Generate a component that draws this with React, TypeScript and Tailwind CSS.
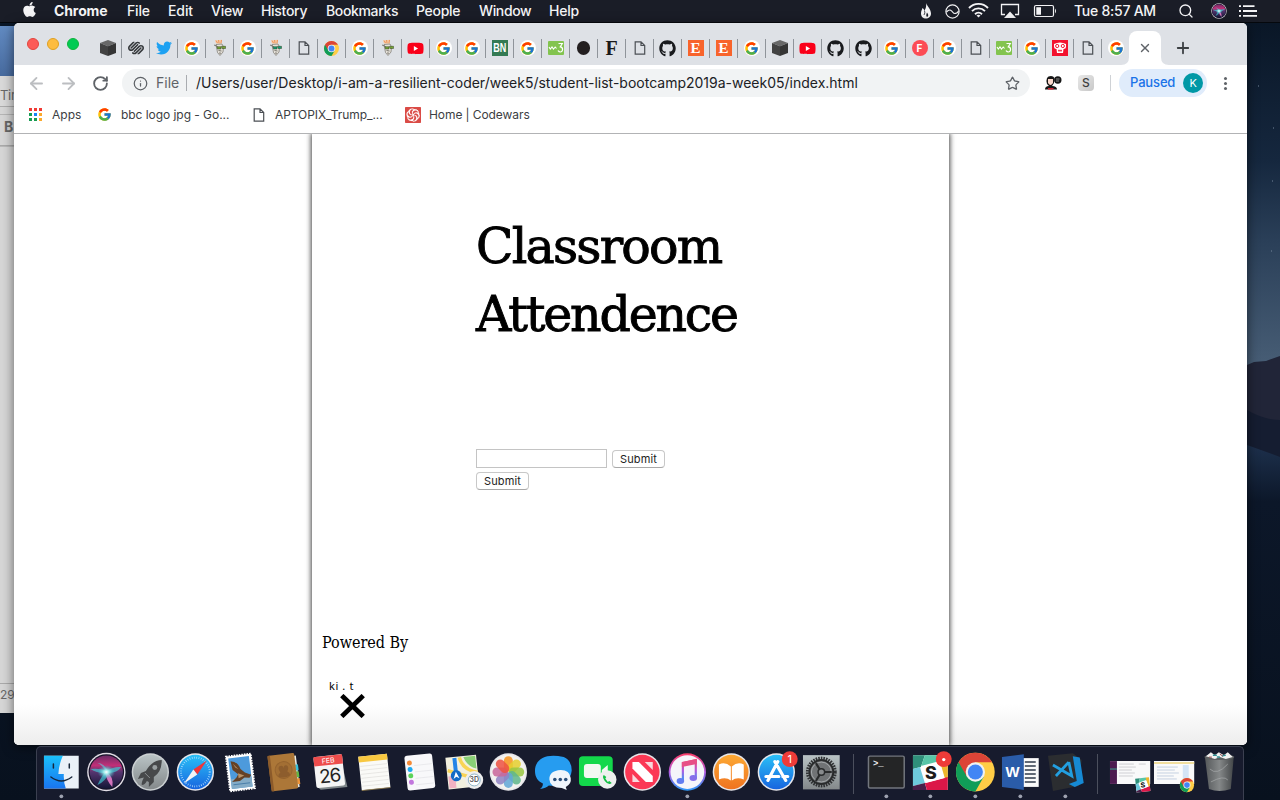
import React from "react";
import { FaApple, FaTwitter, FaGithub, FaYoutube } from "react-icons/fa";
import { FcGoogle } from "react-icons/fc";
import { SiSquarespace, SiCodewars } from "react-icons/si";
import { ArrowLeft, ArrowRight, Info, Plus, RotateCw, Search, Star, X } from "lucide-react";

type Kids = { children: React.ReactNode };

/* ---------- favicons ---------- */

const Google = () => (
  <span className="flex size-4 items-center justify-center rounded-full bg-white">
    <FcGoogle size={15} />
  </span>
);

const Cube = () => (
  <svg width="18" height="18" viewBox="0 0 18 18">
    <path d="M9 1 17 4 9 7.200 1 4Z" fill="#686868" />
    <path d="M1 4 9 7.200V17L1 14Z" fill="#424242" />
    <path d="M17 4 9 7.200V17L17 14Z" fill="#353535" />
  </svg>
);

const Page = () => (
  <svg width="12" height="14" viewBox="0 0 12 14" fill="none" stroke="#4b4f54" strokeWidth="1.200">
    <path d="M1.200.8H7L10.700 4.500V13.200H1.200Z M7 .8V4.500H10.700" />
  </svg>
);

const Goat = ({ green = false }: { green?: boolean }) => (
  <svg width="14" height="18" viewBox="0 0 14 18">
    <path d="M2 1.500 9 .8 8.500 5 3 4.500Z" fill="#f8c9a2" />
    <path d="M3 1.500 4.500 4M5.500 1 6 4M8.500 1 8 4" stroke="#eb965f" fill="none" />
    <path d="M3 5.500 9 5 10.500 8 10 13 7 16.500 4.500 13.500Z" fill="#e6e2da" stroke="#77736b" strokeWidth=".7" />
    <path d="M1 6 4.500 7.500M5.500 11.500 8.500 12M6 14 8 14.200" stroke="#5e5a53" strokeWidth=".8" fill="none" />
    <path d="M4 7.700H8L8 10H4.500ZM8.500 7.300H12.500V9.500H9Z" fill={green ? "#149b72" : "#76a534"} stroke="#334023" strokeWidth=".5" />
  </svg>
);

const ChromeShape = () => (
  <g>
    <circle cx="10" cy="10" r="10" fill="#ffcd46" />
    <path d="M10 10 1.340 5A10 10 0 0 0 10 20L14.330 12.500Z" fill="#109d58" />
    <path d="M1.340 5A10 10 0 0 1 18.660 5H10L5.670 12.500Z" fill="#db4437" />
    <circle cx="10" cy="10" r="5" fill="#f1f1f1" />
    <circle cx="10" cy="10" r="3.900" fill="#4285f4" />
  </g>
);

const Youtube = () => (
  <span className="relative flex items-center justify-center">
    <i className="absolute size-[7px] bg-white" />
    <FaYoutube size={17} color="#fa0019" className="relative" />
  </span>
);

const W3 = () => (
  <svg width="16" height="14" viewBox="0 0 16 14">
    <rect width="16" height="14" rx="1" fill="#83c44f" />
    <path d="M1 6 2.300 8 4 6 5.500 8 7.200 6 8.500 7.500" stroke="#fff" strokeWidth="1.100" fill="none" />
    <path d="M10.500 2.500H14.300L12.300 5.800C15.600 6.200 15 11 12.300 11 11 11 10.500 10.200 10 9.500" stroke="#fff" strokeWidth="1.200" fill="none" />
  </svg>
);

const Etsy = () => (
  <span className="flex size-4 items-center justify-center bg-[#f8642c] font-['Liberation_Serif',serif] text-[15px] leading-none font-bold text-white">E</span>
);

const Robot = () => (
  <svg width="16" height="16" viewBox="0 0 16 16">
    <rect width="16" height="16" fill="#f3122f" />
    <path d="M2 4Q8 1 14 4V7Q14 9 11.500 9L11 13H5L4.500 9Q2 9 2 7Z" fill="#fff" />
    <circle cx="5.200" cy="6" r="1.600" fill="none" stroke="#f3122f" />
    <circle cx="10.800" cy="6" r="1.600" fill="none" stroke="#f3122f" />
    <path d="M6 10.500H10M7 12V9.500M9 12V9.500" stroke="#f3122f" strokeWidth=".7" />
  </svg>
);

type Fav = "cube" | "sq" | "tw" | "g" | "goat" | "goat2" | "page" | "chrome" | "yt" | "bn" | "w3" | "dot" | "F" | "gh" | "etsy" | "fred" | "robot";

const favicon: Record<Fav, React.ReactNode> = {
  cube: <Cube />,
  sq: <SiSquarespace size={16} color="#35383b" />,
  tw: <FaTwitter size={16} color="#1da1f2" />,
  g: <Google />,
  goat: <Goat />,
  goat2: <Goat green />,
  page: <Page />,
  chrome: <svg width="15" height="15" viewBox="0 0 20 20"><ChromeShape /></svg>,
  yt: <Youtube />,
  bn: <span className="flex size-4 items-center justify-center bg-[#347a53] text-white"><span className="scale-x-75 font-['Liberation_Sans',sans-serif] text-[12px] leading-none font-bold">BN</span></span>,
  w3: <W3 />,
  dot: <span className="size-[13.500px] rounded-full bg-[#231f20]" />,
  F: <span className="font-['Liberation_Serif',serif] text-[20px] leading-none font-bold text-[#1a1a1a]">F</span>,
  gh: <FaGithub size={17} color="#191b1e" />,
  etsy: <Etsy />,
  fred: <span className="flex size-4 items-center justify-center rounded-full bg-[#fc4c55] font-['Inter',sans-serif] text-[10px] leading-none font-bold text-white">F</span>,
  robot: <Robot />,
};

const tabs: Fav[] = [
  "cube", "sq", "tw", "g", "goat", "g", "goat2", "page", "chrome", "g", "goat", "yt", "g", "g", "bn", "g", "w3", "dot", "F",
  "page", "gh", "etsy", "etsy", "g", "cube", "yt", "gh", "gh", "g", "fred", "g", "page", "w3", "g", "robot", "page", "g",
];

/* ---------- menu bar ---------- */

const MenuBar = () => (
  <div className="flex h-[23px] shrink-0 items-center border-b border-[#05080d] bg-[#1a1d27] pb-px pl-[21px] text-[14px] font-medium text-[#f4f4f6]">
    <div className="w-[33px]"><FaApple size={17} className="-mt-0.5" /></div>
    <div className="w-[73px] font-bold tracking-[-0.100px]">Chrome</div>
    <div className="w-[41px] tracking-[-0.150px]">File</div>
    <div className="w-[43px] tracking-[-0.100px]">Edit</div>
    <div className="w-[50px] tracking-[-0.200px]">View</div>
    <div className="w-[65px] tracking-[-0.300px]">History</div>
    <div className="w-[90px] tracking-[-0.350px]">Bookmarks</div>
    <div className="w-[63px] tracking-[-0.300px]">People</div>
    <div className="w-[70px] tracking-[-0.350px]">Window</div>
    <div className="w-[370px] tracking-[-0.200px]">Help</div>
    <div className="flex h-full w-[155px] items-center">
      <svg width="155" height="22" viewBox="919 0 155 22" fill="none" stroke="#f4f4f6">
        <path d="M926 3C927 6 931 9 931 13.500 931 17 928.500 18.500 926 18.500 923 18.500 921 16.500 921 13.500 921 11 922 10 922.500 8 924 9 924 10 924.500 10.500 926 8 926.500 6 926 3Z" fill="#f4f4f6" stroke="none" />
        <path d="M924.500 10.500Q925.500 13 924 15" stroke="#1a1d27" strokeWidth=".8" />
        <path d="M927 12.500Q929.500 15.500 927 17 925.500 15.500 927 12.500Z" fill="#1a1d27" stroke="none" />
        <circle cx="952.500" cy="11.500" r="6.600" strokeWidth="1.200" />
        <path d="M946.500 12C950 8 952 11 953 12.500S957 14 958.500 11" strokeWidth="1.200" />
        <path d="M969 8A13 13 0 0 1 988 8M972 11.200A9 9 0 0 1 985 11.200M975 14.200A5 5 0 0 1 982 14.200" strokeWidth="1.900" />
        <path d="M978.500 17.500 976.500 15.500Q978.500 14 980.500 15.500Z" fill="#f4f4f6" stroke="none" />
        <path d="M1005 14.500H1001.500V4.500H1018.500V14.500H1015" strokeWidth="1.300" />
        <path d="M1010 11.500 1016 18H1004Z" fill="#f4f4f6" stroke="none" />
        <rect x="1034.500" y="5.500" width="19" height="11" rx="1.500" strokeWidth="1.200" />
        <path d="M1036.300 7.300H1041V14.700H1036.300Z M1055 8.500Q1057 11 1055 13.500Z" fill="#f4f4f6" stroke="none" />
      </svg>
    </div>
    <div className="w-[104px] tracking-[-0.250px] whitespace-nowrap">Tue 8:57 AM</div>
    <Search size={16} strokeWidth={2} />
    <svg className="ml-[17px]" width="16" height="16" viewBox="-20 -20 40 40"><SiriShape /></svg>
    <svg className="ml-[12px]" width="18" height="12" viewBox="0 0 18 12">
      <path d="M0 1.200H2M0 6H2M0 10.800H2M4 1.200H15.500M4 6H18M4 10.800H18" stroke="#f4f4f6" strokeWidth="1.800" />
    </svg>
  </div>
);

const SiriShape = () => (
  <g>
    <defs>
      <linearGradient id="siri" x1="0" y1="0" x2="0" y2="1">
        <stop offset="0" stopColor="#6b2c66" /><stop offset=".3" stopColor="#c22f78" /><stop offset=".5" stopColor="#55356f" /><stop offset="1" stopColor="#131636" />
      </linearGradient>
      <radialGradient id="siriGlow"><stop offset="0" stopColor="#fff" /><stop offset=".3" stopColor="#a5f4f1" stopOpacity=".9" /><stop offset="1" stopColor="#2cb5c7" stopOpacity="0" /></radialGradient>
    </defs>
    <circle r="19.300" fill="#e3dfe7" /><circle r="17.900" fill="#171329" /><circle r="16.700" fill="url(#siri)" />
    <path d="M-16 -3Q-6 -4 0 -1 8 -6 15 -5 11 1 2 1 0 9 -9 13 -5 5 -2 1-10 1-16-3Z" fill="#3fd0d8" opacity=".65" />
    <path d="M0 0Q8 5 6 15 0 9 -1 0Z" fill="#e57bc8" opacity=".9" />
    <path d="M0 0Q-4 -7 -9 -9 -2 -9 2 0Z" fill="#5ad0e0" opacity=".6" />
    <ellipse rx="9" ry="7" fill="url(#siriGlow)" />
  </g>
);

/* ---------- browser ---------- */

const TabStrip = () => (
  <div className="flex h-[42px] shrink-0 items-end bg-[#dee1e6] pl-[13px]">
    <div className="flex h-[42px] w-[67px] items-center gap-2 [&>i]:size-3 [&>i]:rounded-full [&>i]:border">
      <i className="border-[#e2463f] bg-[#fc5b57]" />
      <i className="border-[#dfa023] bg-[#fdbc40]" />
      <i className="border-[#10b43c] bg-[#02cb54]" />
    </div>
    <div className="flex h-[34px] items-center">
      {tabs.map((t, i) => (
        <div
          key={i}
          className={i < tabs.length - 1
            ? "flex h-[19px] w-[28px] items-center justify-center border-r border-[#8f949a]"
            : "flex h-[19px] w-[28px] items-center justify-center"}
        >
          {favicon[t]}
        </div>
      ))}
    </div>
    <div className="-ml-[9px] flex h-[34px] items-end text-white">
      <svg width="8" height="8" viewBox="0 0 8 8"><path d="M8 0V8H0Q8 8 8 0Z" fill="currentColor" /></svg>
      <div className="flex h-[34px] w-8 items-center justify-center rounded-t-lg bg-white text-[#5f6368]"><X size={14} strokeWidth={2.300} /></div>
      <svg width="8" height="8" viewBox="0 0 8 8"><path d="M0 0V8H8Q0 8 0 0Z" fill="currentColor" /></svg>
    </div>
    <div className="flex h-[34px] items-center pl-[5px] text-[#3c4043]"><Plus size={18} strokeWidth={2.400} /></div>
  </div>
);

const Toolbar = () => (
  <div className="flex h-9 shrink-0 items-center bg-white pl-[13px] text-[#5f6368]">
    <ArrowLeft size={19} strokeWidth={2.300} color="#bcbec1" />
    <ArrowRight size={19} strokeWidth={2.300} color="#bcbec1" className="ml-[13px]" />
    <RotateCw size={17} strokeWidth={2.600} className="ml-[14px]" />
    <div className="ml-[13px] flex h-7 w-[908px] items-center rounded-full bg-[#f1f3f4] pl-[11px] text-[14px]">
      <Info size={15} strokeWidth={2} />
      <span className="ml-2 w-[30px] pb-[2px]">File</span>
      <span className="h-4 w-px bg-[#a9acb0]" />
      <span className="ml-[9px] flex-1 pb-[2px] tracking-[-0.002px] text-[#202124]">
        /Users/user/Desktop/i-am-a-resilient-coder/week5/student-list-bootcamp2019a-week05/index.html
      </span>
      <Star size={15} strokeWidth={2.100} className="mr-[10px]" />
    </div>
    <svg className="ml-[14px]" width="18" height="16" viewBox="0 0 18 16">
      <path d="M3 9Q1 1 7 1 12 1 10 8L8 11Q13 11 13 14.500H1Q1 11 5 11Z" fill="#171717" />
      <path d="M4 4H9V8Q6.500 12 4 8Z" fill="#fbd9cd" />
      <path d="M4 13H9.500V14.500H4Z" fill="#cf2130" />
      <circle cx="13.800" cy="5" r="3.700" fill="#171717" /><path d="M12 4H15.500M12 6H15" stroke="#bbb" strokeWidth=".7" />
    </svg>
    <div className="ml-4 flex size-4 items-center justify-center rounded bg-[linear-gradient(135deg,#e8e8e8,#c8c8c8)] text-[12px] font-medium text-[#3f3f3f]">S</div>
    <div className="ml-4 h-4 w-px bg-[#cfd2d6]" />
    <div className="ml-2 flex h-7 w-[88px] items-center rounded-full bg-[#e0ecfb] pl-[11px] text-[13px] font-medium tracking-[-0.150px] text-[#1a73e8]">
      <span className="w-[53px]">Paused</span>
      <span className="flex size-5 items-center justify-center rounded-full bg-[#0098a6] text-[11px] font-normal text-white">K</span>
    </div>
    <div className="ml-[17px] flex flex-col gap-[2px] [&>i]:size-[3px] [&>i]:rounded-full [&>i]:bg-[#5f6368]"><i /><i /><i /></div>
  </div>
);

const BookmarkBar = () => (
  <div className="flex h-[33px] shrink-0 items-center border-b border-[#b2b3b5] bg-white pb-[5px] pl-[15px] text-[12px] text-[#3c4043]">
    <svg width="13" height="13" viewBox="0 0 13 13">
      <path d="M0 0H3V3H0ZM5 0H8V3H5ZM10 0H13V3H10Z" fill="#f03a34" />
      <path d="M0 5H3V8H0ZM0 10H3V13H0ZM5 10H8V13H5Z" fill="#179c52" />
      <path d="M5 5H8V8H5Z" fill="#1684f8" /><path d="M10 5H13V8H10ZM10 10H13V13H10Z" fill="#fba92c" />
    </svg>
    <span className="ml-[10px] w-[45px]">Apps</span>
    <FcGoogle size={15} />
    <span className="ml-[9px] w-[132px] tracking-[-0.050px]">bbc logo jpg - Go...</span>
    <Page />
    <span className="ml-[10px] w-[130px] tracking-[-0.070px]">APTOPIX_Trump_...</span>
    <span className="flex size-4 items-center justify-center bg-white text-[#da4b46]"><SiCodewars size={16} /></span>
    <span className="ml-2 tracking-[-0.080px]">Home | Codewars</span>
  </div>
);

const SubmitButton = ({ children }: Kids) => (
  <button className="flex h-[18px] w-[53px] items-center justify-center rounded-[4px] border border-[#c8c8c8] border-b-[#a8a8a8] bg-white text-[11px] tracking-[0.120px] text-[#222]">
    {children}
  </button>
);

const WebPage = () => (
  <div className="flex h-[611px] justify-center overflow-hidden bg-white bg-[linear-gradient(to_bottom,#fff_0,#fff_570px,#ededed_611px)]">
    <main className="w-[637px] bg-white bg-[linear-gradient(to_bottom,#fff_0,#fff_570px,#ededed_611px)] pl-[10px] font-['DejaVu_Serif',serif] text-black shadow-[0_0_5px_1px_#444]">
      <h1 className="h-[315px] pt-[79px] pl-[154px] text-[49px] leading-[68px] [-webkit-text-stroke:0.900px_#000]">
        <span className="block tracking-[-1.800px]">Classroom</span>
        <span className="block tracking-[-2.200px]">Attendence</span>
      </h1>
      <form className="flex h-[182px] flex-col items-start gap-1 pl-[154px] font-['Inter',sans-serif]">
        <div className="flex items-end gap-[5px]">
          <input className="h-[19px] w-[131px] border border-[#c4c4c4] bg-white" />
          <SubmitButton>Submit</SubmitButton>
        </div>
        <SubmitButton>Submit</SubmitButton>
      </form>
      <footer>
        <p className="h-[47px] font-['DejaVu_Serif_Condensed','DejaVu_Serif',serif] text-[16px] leading-6 tracking-[-0.020px]">Powered By</p>
        <div className="w-10 pl-[7px] font-['Noto_Sans',sans-serif] text-[11px] leading-4 tracking-[0.600px] whitespace-nowrap">ki . t</div>
        <svg className="ml-[18px]" width="25" height="24" viewBox="0 0 25 24">
          <path d="M3.500 3.300 21.500 20.700M21.500 3.300 3.500 20.700" stroke="#000" strokeWidth="4.800" strokeLinecap="square" />
        </svg>
      </footer>
    </main>
  </div>
);

/* ---------- dock ---------- */

const Cell = ({ children, running = false }: Kids & { running?: boolean }) => (
  <svg className="w-[44.700px] shrink-0" height="54" viewBox="0 0 45 54">
    {children}
    {running && <circle cx="22.500" cy="49.500" r="1.900" fill="#9ea2b0" />}
  </svg>
);

const Divider = () => (
  <div className="flex h-[54px] w-[20.400px] shrink-0 items-center justify-center"><span className="h-10 w-px bg-[#4b4f5d]" /></div>
);

const Round = ({ fill, children, rim = "#e7e7eb" }: Kids & { fill: string; rim?: string }) => (
  <Cell><circle cx="22.500" cy="25" r="18.800" fill={rim} /><circle cx="22.500" cy="25" r="17.300" fill={fill} />{children}</Cell>
);

const petals = ["#f7941e", "#e5cf30", "#9ac742", "#5fb78c", "#62a8d6", "#8f83c4", "#c8689b", "#ed5342"];

const SlackTile = () => (
  <g>
    <path d="M0 0H35V35H0Z" fill="#fff" />
    <path d="M0 0H12L8 12 0 14Z" fill="#2f8f7a" /><path d="M12 0H27L29 8 8 12Z" fill="#58c6a7" />
    <path d="M27 0H35V24L31 25 27 6Z" fill="#edb62d" />
    <path d="M0 14 7 12 12 28 0 31Z" fill="#6ecadc" /><path d="M0 31 12 28 14 35H0Z" fill="#49204a" />
    <path d="M12 28 35 22V35H14Z" fill="#dc1748" />
    <path d="M8 11 27 6 32 23 13 28Z" fill="#fff" />
    <text x="18" y="24" textAnchor="middle" fontFamily="Inter" fontWeight="800" fontSize="18" fill="#1d1d1d">S</text>
  </g>
);

const Badge = ({ label }: { label: string }) => (
  <g><circle cx="36" cy="12" r="8" fill="#ee3b38" /><text x="36" y="16" textAnchor="middle" fontFamily="Inter" fontSize="11" fill="#fff">{label}</text></g>
);

const Dock = () => (
  <div className="flex h-[54px] w-[1208px] rounded-t-[5px] border-x border-t border-[#3b4050] bg-[#171b2d] pl-[2px]">
    <Cell running>
      <defs>
        <linearGradient id="fl" x1="0" y1="0" x2="0" y2="1"><stop stopColor="#1bc0fb" /><stop offset="1" stopColor="#1975f0" /></linearGradient>
        <linearGradient id="gray" x1="0" y1="0" x2="0" y2="1"><stop stopColor="#b9c3c5" /><stop offset="1" stopColor="#84898b" /></linearGradient>
        <linearGradient id="sky" x1="0" y1="0" x2="0" y2="1"><stop stopColor="#2ac0f7" /><stop offset="1" stopColor="#1765df" /></linearGradient>
        <linearGradient id="orange" x1="0" y1="0" x2="0" y2="1"><stop stopColor="#fda934" /><stop offset="1" stopColor="#ef7320" /></linearGradient>
        <linearGradient id="note" x1="0" y1="0" x2="0" y2="1"><stop stopColor="#fb3f68" /><stop offset=".5" stopColor="#b05be0" /><stop offset="1" stopColor="#2f9bf8" /></linearGradient>
        <linearGradient id="bin" x1="0" x2="1"><stop stopColor="#55585a" /><stop offset=".5" stopColor="#858889" /><stop offset="1" stopColor="#424547" /></linearGradient>
      </defs>
      <path d="M5 8.500H40V41.500H5Z" fill="#eaf1f8" />
      <path d="M5 8.500H24Q20 17.500 19.500 27H25Q24.500 34.500 27 41.500H5Z" fill="url(#fl)" />
      <path d="M14.500 17V21M30.500 17V21M12 30Q22.500 38 33 30" fill="none" stroke="#17273a" strokeWidth="1.500" strokeLinecap="round" />
    </Cell>
    <Cell><g transform="translate(22.500 25)"><SiriShape /></g></Cell>
    <Round fill="url(#gray)" rim="#cbd0d2">
      <path d="M34 13Q24 13.500 18 24L13 26 10 32 16 30.500Q13 36 14 38 17 38 19 34L21 35 21 40 26 35V30Q34 25 34 13Z" fill="#47494b" /><circle cx="27" cy="20.500" r="2.500" fill="#999fa1" />
      <path d="M17 26 22 31" stroke="#9ca1a3" strokeWidth=".8" />
    </Round>
    <Round fill="url(#sky)">
      <circle cx="22.500" cy="25" r="14.500" fill="none" stroke="#bfe7ff" strokeWidth="2" strokeDasharray=".6 1.700" />
      <path d="M34 13.500 24.500 27.500 20.500 22.500Z" fill="#f13538" /><path d="M11 36.500 20.500 22.500 24.500 27.500Z" fill="#f1f3f6" />
    </Round>
    <Cell>
      <g transform="rotate(-7 22 25)">
        <path d="M10 8H35V43H10Z" fill="#fff" stroke="#fff" strokeWidth="2" strokeDasharray="1.600 1" />
        <path d="M12 10H33V41H12Z" fill="#4d9adc" /><path d="M12 31H33V41H12Z" fill="#84acc7" />
        <path d="M14 13Q21 14 23 22L27 26 33 29 31 32 26 31 21 34 13 34 18 30 20 27 15 22Z" fill="#654126" />
        <path d="M16 16 21 22 18 20Z M20 26 26 29 20 31Z" fill="#b99369" /><path d="M14 37H31" stroke="#4a7faa" />
      </g>
    </Cell>
    <Cell>
      <g transform="rotate(-7 22 25)">
        <path d="M30 10H36V42H30Z" fill="#e9ece8" /><path d="M34 19H37V25H34Z" fill="#3ac1d9" /><path d="M34 26H37V32H34Z" fill="#63b645" /><path d="M34 33H37V39H34Z" fill="#ef963b" />
        <rect x="7.500" y="7" width="27" height="36" rx="1.500" fill="#ac7738" /><path d="M7.500 7H10V43H7.500Z" fill="#8b5a2a" />
        <circle cx="22" cy="23" r="8.500" fill="#a36f34" stroke="#96642f" /><path d="M16 29Q16 26 18.500 25 16 21 18 19 22 17 22 21 23 17 26 19 28 21 25.500 25 28 26 28 29 22 32 16 29Z" fill="#8d5d2d" />
      </g>
    </Cell>
    <Cell>
      <g transform="rotate(-6 22 25)">
        <path d="M35 9 39 42H12L10 40Z" fill="#81898c" /><rect x="8" y="8.500" width="29" height="31.500" rx="2" fill="#f5f5f5" /><path d="M8 8.500H37V18H8Z" fill="#ed4c4c" />
        <text x="22.500" y="16" textAnchor="middle" fontFamily="Inter" fontSize="7" fill="#fff">FEB</text>
        <text x="22.500" y="35.500" textAnchor="middle" fontFamily="Inter" fontSize="19" letterSpacing="-1" fill="#222">26</text>
      </g>
    </Cell>
    <Cell>
      <g transform="rotate(-6 22 25)">
        <path d="M8 8H37V42H8Z" fill="#fafaf7" /><path d="M8 8H37V14H8Z" fill="#f8c841" />
        <path d="M9 18H36M9 22H36M9 26H36M9 30H36M9 34H36M9 38H36" stroke="#dddcd8" strokeWidth=".6" />
        <path d="M8 42.300H37" stroke="#a58d52" strokeWidth=".7" />
      </g>
    </Cell>
    <Cell>
      <g transform="rotate(-6 22 25)">
        <rect x="9" y="7.500" width="28" height="35" rx="2.500" fill="#f8f8fa" />
        <circle cx="13.500" cy="15" r="2.500" fill="#f58b37" /><circle cx="13.500" cy="21.500" r="2.500" fill="#1eaaf1" /><circle cx="13.500" cy="28" r="2.500" fill="#5bd259" /><circle cx="13.500" cy="34.500" r="2.500" fill="#c277dd" />
        <path d="M18 18H36M18 24.500H36M18 31H36M18 37.500H36" stroke="#e3e3e8" strokeWidth=".7" />
      </g>
    </Cell>
    <Cell>
      <g transform="rotate(-6 22 25)">
        <path d="M6 9H37V41H6Z" fill="#f2f0df" /><path d="M24 10H36V23Q27 20 24 10Z" fill="#89cf76" /><path d="M7 28H14V40H7Z" fill="#f2b2c2" />
        <path d="M7 22 37 34M20 10Q22 23 37 27" stroke="#f9d454" strokeWidth="3.500" fill="none" /><path d="M15 10V30" stroke="#2384e7" strokeWidth="4" />
        <circle cx="15" cy="28" r="5.500" fill="#126bc6" /><path d="M15 24 18 31 15 29 12 31Z" fill="#fff" />
      </g>
      <circle cx="33.500" cy="33" r="9" fill="#eee" /><circle cx="33.500" cy="33" r="6" fill="#fff" stroke="#78a6bb" strokeWidth=".8" />
      <text x="33.500" y="35.500" textAnchor="middle" fontFamily="Inter" fontSize="7" fontWeight="600" fill="#555">3D</text>
    </Cell>
    <Round fill="#f3f2ef">
      {petals.map((c, i) => <rect key={c} x="18" y="9" width="9" height="15.500" rx="4.500" fill={c} opacity=".86" transform={`rotate(${i * 45} 22.500 25)`} />)}
    </Round>
    <Cell>
      <path d="M22.500 8.500C10 8.500 4 15.500 4 23.500 4 30.500 7 34.500 12 36.500Q12 40.500 9 42 15 41.500 18 38.500 39 40.500 41 23.500 41 13.500 33 10 27 8.500 22.500 8.500Z" fill="#269cf0" />
      <path d="M30 23Q18 24 18.500 32.500 19 41 31 41L36 43 35 40Q41 37 40 31 39 23 30 23Z" fill="#eff5fb" />
      <circle cx="24" cy="32.500" r="1.800" fill="#284d79" /><circle cx="29.500" cy="32.500" r="1.800" fill="#284d79" /><circle cx="35" cy="32.500" r="1.800" fill="#284d79" />
    </Cell>
    <Cell>
      <rect x="4" y="9" width="34" height="30" rx="4" fill="#13d84b" /><rect x="9" y="17" width="17" height="14" rx="3" fill="#f2f8f2" /><path d="M27 23 33 18V31L27 27Z" fill="#f2f8f2" />
      <circle cx="32.500" cy="32.500" r="9.300" fill="#edf0ee" /><path d="M29 28Q27 30 30 34 34 39 37 36L34.500 34 33 35 30.500 31.500 31.500 30Z" fill="#12bf43" />
    </Cell>
    <Round fill="#fb3855">
      <path d="M12.500 15H19L33 29V35H26L12.500 21.500Z" fill="#fff" /><path d="M25 15H33V23Z M12.500 27 20 35H12.500Z" fill="#f8d9dd" />
    </Round>
    <Cell running>
      <circle cx="22.500" cy="25" r="18.800" fill="url(#note)" /><circle cx="22.500" cy="25" r="17" fill="#f5f5fa" />
      <path d="M18 34V16L31 13V31" stroke="url(#note)" strokeWidth="2.200" fill="none" /><path d="M17 15 32 12V17L17 20Z" fill="#e74f87" /><ellipse cx="15.500" cy="34" rx="3.800" ry="3" fill="#627df1" /><ellipse cx="28.500" cy="31" rx="3.800" ry="3" fill="#8570ea" />
    </Cell>
    <Round fill="url(#orange)">
      <path d="M22 19.500Q16 14 10 17.500V32.500Q17 29.500 22 33.500ZM23 19.500Q29 14 35 17.500V32.500Q28 29.500 23 33.500Z" fill="#fff" />
    </Round>
    <Round fill="url(#sky)">
      <path d="M24 14.500 14 33.500M21 14.500 32 33.500M12 29.500H25M29 29.500H34" stroke="#fff" strokeWidth="3.200" strokeLinecap="round" /><Badge label="1" />
    </Round>
    <Cell>
      <rect x="4" y="8" width="37" height="34.500" fill="url(#gray)" /><circle cx="22.500" cy="25" r="14" fill="none" stroke="#303234" strokeWidth="3" strokeDasharray="1.600 1" />
      <circle cx="22.500" cy="25" r="12" fill="#707375" stroke="#292b2c" strokeWidth="2" /><circle cx="22.500" cy="25" r="10" fill="none" stroke="#a2a6a8" />
      <path d="M22.500 25 17 16M22.500 25 17 34M22.500 25H33" stroke="#292b2c" strokeWidth="2.200" /><circle cx="22.500" cy="25" r="3.300" fill="#888b8d" stroke="#292b2c" strokeWidth="1.500" />
    </Cell>
    <Divider />
    <Cell running>
      <rect x="4.500" y="9" width="36" height="32" rx="1.500" fill="#242526" stroke="#72767d" strokeWidth="1.500" />
      <text x="9" y="19" fontFamily="Liberation Mono" fontWeight="700" fontSize="9" fill="#eee">&gt;_</text>
    </Cell>
    <Cell running><g transform="translate(5 8)"><SlackTile /></g><circle cx="36" cy="12" r="8" fill="#ee3b38" /><circle cx="36" cy="12.500" r="1.700" fill="#fff" /></Cell>
    <Cell running><g transform="translate(3 5.500) scale(1.950)"><ChromeShape /></g></Cell>
    <Cell running>
      <path d="M21 11H41V40H21Z" fill="#fafafa" /><path d="M27 15H38M27 19H38M27 23H38M27 27H38M27 31H38M27 35H38" stroke="#303b4b" strokeWidth="1.500" />
      <path d="M4 10 26 7V43L4 40Z" fill="#2a5ca9" /><text x="14.500" y="30.500" textAnchor="middle" fontFamily="Liberation Sans" fontWeight="700" fontSize="15" fill="#fff">W</text>
    </Cell>
    <Cell running>
      <path d="M5 8.500 30 6 39 13 36 39 10 44Z" fill="#2b2d30" /><path d="M30 9 37 10.500 41 36 32 40 26 37 34 34Z" fill="#1689d3" />
      <path d="M26 15 29 29 10 18M26 15 13 29" fill="none" stroke="#229fe0" strokeWidth="2.800" />
    </Cell>
    <Divider />
    <Cell>
      <path d="M2 14H42.500V37H2Z" fill="#f9f9fa" /><path d="M2 14H9V37H2Z" fill="#4d1b50" /><path d="M2 22H9" stroke="#3aa18d" />
      <path d="M11 17H26M11 20H28M11 23H24M11 26H27M11 29H25M31 17H38" stroke="#bcbcc2" strokeWidth=".7" />
      <g transform="rotate(-6 35 38) translate(28 31) scale(.4)"><SlackTile /></g>
    </Cell>
    <Cell>
      <path d="M2 14H42.500V37H2Z" fill="#fafafa" /><path d="M2 16H42.500" stroke="#f2df9e" strokeWidth="2" />
      <path d="M5 20H26M5 23H23M5 26H27M5 29H22M5 32H25" stroke="#b7c6db" strokeWidth=".8" /><path d="M31 18H37V34H31Z" fill="#d4e4f5" />
      <g transform="translate(28 31) scale(.72)"><ChromeShape /></g>
    </Cell>
    <Cell>
      <path d="M8 10 37 10 34 42Q22.500 46 12 42Z" fill="url(#bin)" /><ellipse cx="22.500" cy="10" rx="15" ry="3" fill="#5c5f61" />
      <path d="M9 9 14 5 18 8 22 5 27 8 31 5 36 10 29 12 23 10 18 12Z" fill="#f2f2f1" /><path d="M16 8H20M25 9 29 8M20 10H23" stroke="#318f94" strokeWidth="1.500" /><path d="M23 7 26 9M12 10H15" stroke="#954e50" />
      <path d="M13 22Q20 29 31 17M14 35Q27 28 31 33" stroke="#a8abad" strokeWidth=".7" fill="none" />
    </Cell>
  </div>
);

/* ---------- desktop ---------- */

const Wallpaper = () => (
  <svg className="absolute inset-0" width="1280" height="800" viewBox="0 0 1280 800">
    <defs>
      <linearGradient id="night" x1="0" y1="0" x2="0" y2="1"><stop stopColor="#081423" /><stop offset=".2" stopColor="#15273e" /><stop offset=".3" stopColor="#2a3f58" /><stop offset=".45" stopColor="#465c74" /></linearGradient>
      <linearGradient id="dune" x1="0" y1="0" x2="0" y2="1"><stop stopColor="#1d304c" /><stop offset=".16" stopColor="#0c1729" /><stop offset="1" stopColor="#08111e" /></linearGradient>
    </defs>
    <rect width="1280" height="800" fill="url(#night)" />
    <path d="M0 365H1247L1254 362 1266 361 1280 356V470H0Z" fill="#212538" />
    <path d="M0 410H1247Q1264 420 1280 420V470H0Z" fill="#151d31" />
    <path d="M0 445H1247L1280 457V800H0Z" fill="url(#dune)" />
    <path d="M1273 128H1274M1272 181H1273M1271 251H1272M1258 86H1259" stroke="#74869b" />
  </svg>
);

const BackWindow = () => (
  <div className="absolute top-[26px] left-0 flex h-[687px] w-[30px] flex-col bg-[#d6d6d6] text-[#686868]">
    <div className="h-[50px] bg-[linear-gradient(#628bc2,#486b9f)]" />
    <div className="h-[31px] border-b border-[#acacac] bg-[#d9d9d9] pt-[11px] text-[13px] leading-[17px] tracking-[-0.300px]">Tim</div>
    <div className="h-2 border-b border-[#b5b5b5]" />
    <div className="h-[23px] pl-1 text-[14px] leading-[23px] font-bold">B</div>
    <div className="h-2 border-b border-[#aaa]" />
    <div className="flex-1 border-t border-[#b9b9b9]" />
    <div className="h-[30px] border-t border-[#aaa] text-[12px] leading-[22px]">29</div>
  </div>
);

export default function App() {
  return (
    <div className="relative h-[800px] w-[1280px] overflow-hidden bg-[#0a1422] font-['Inter',sans-serif]">
      <Wallpaper />
      <BackWindow />
      <div className="relative flex h-full flex-col">
        <MenuBar />
        <section className="ml-[14px] flex h-[722px] w-[1233px] shrink-0 flex-col overflow-hidden rounded-[5px] bg-white shadow-[0_2px_12px_rgba(0,0,0,0.55)]">
          <TabStrip />
          <Toolbar />
          <BookmarkBar />
          <WebPage />
        </section>
        <div className="mt-px ml-9"><Dock /></div>
      </div>
    </div>
  );
}
